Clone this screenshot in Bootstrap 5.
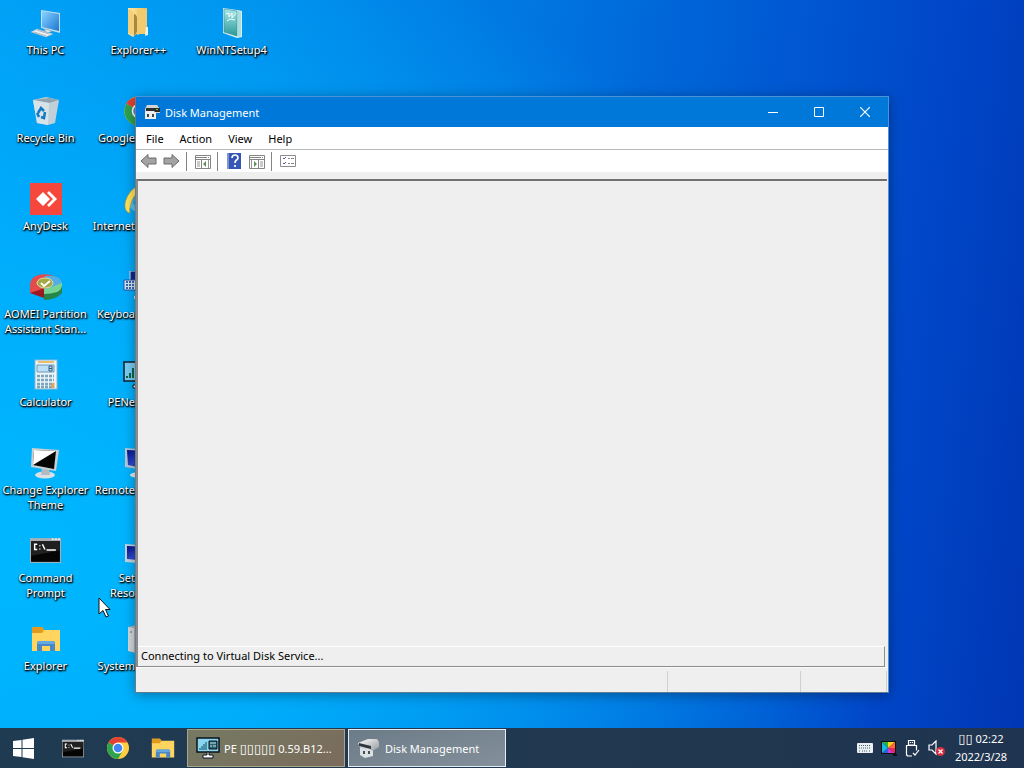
<!DOCTYPE html>
<html lang="en">
<head>
<meta charset="utf-8">
<meta name="viewport" content="width=device-width, initial-scale=1">
<title>Disk Management</title>
<link href="https://cdn.jsdelivr.net/npm/bootstrap@5.3.0/dist/css/bootstrap.min.css" rel="stylesheet">
<style>
body{font-family:"Noto Sans","Open Sans",sans-serif;font-size:11px;line-height:15px;min-height:100vh;
 background:radial-gradient(ellipse 88% 85% at 0% 72%,rgba(0,184,255,.98) 0%,rgba(0,180,255,.85) 35%,rgba(0,150,245,0) 100%),linear-gradient(97deg,#009cf4 0%,#008eec 25%,#0076e0 48%,#005cd4 68%,#0046c8 86%,#0036b2 100%);overflow:hidden}
button{font:inherit;color:inherit;background:none;border:0;padding:0}
svg{display:block;flex:none}
.icon-grid{display:grid;grid-template-columns:repeat(3,93px);grid-auto-rows:88px;margin-left:-1px}
.desk-item{color:#fff;text-decoration:none;text-align:center;text-shadow:1px 1px 2px #000,0 1px 2px #000,1px 1px 1px rgba(0,0,0,.7);padding-top:7px}
.desk-item svg{margin:0 auto 3px}
.desk-item span{display:block;white-space:nowrap}
.desk-item.covered span{text-align:right;padding-right:50px}
.app-win{inset:96px 135px 35px;background:#efefef;border:1px solid #4a94d4;border-left-color:#6b7c88;border-bottom-color:#5f7c90;box-shadow:0 2px 12px rgba(0,0,0,.35)}
.title-row{height:30px;background:#0078d9;color:#fff}
.title-row>svg{margin:0 5px 0 8px}
.caption-btn{width:46px;height:29px;display:grid;place-items:center}
.menu-row{height:23px;background:#fff;border-bottom:1px solid #b4b9bd;color:#000;padding-left:2px}
.menu-row button{padding:0 8px}
.tool-row{height:22px;background:#fff;padding-left:1px;border-bottom:0}
.tool-row button{width:23px;height:22px;display:grid;place-items:center}
.tool-sep{width:1px;height:19px;background:#858585;margin:0 4px 0 3px}
.client{border-top:2px solid #707070;border-left:2px solid #8b8b8b;margin:7px 1px 0 0}
.msg-row{height:21px;border-top:1px solid #fff;border-right:1px solid #8c8c8c;border-bottom:1px solid #8c8c8c;color:#000;padding:1px 0 0 3px;margin-right:2px}
.status-row{height:25px;border-top:1px solid #fafafa;padding-right:1px}
.status-row div{border-right:1px solid #d0d0d0;margin-top:3px}
.pane-a{width:133px}
.pane-b{width:86px}
.task-bar{height:40px;background:linear-gradient(90deg,#1f3b52,#21374f 70%,#1f3450);color:#fff}
.launch{width:46px;height:40px;display:grid;place-items:center}
.launch.slim{width:44px}
.task-btn{width:158px;height:38px;border:1px solid #a9a38c;background:linear-gradient(150deg,#757a61,#7b6b5c);padding:0 0 0 8px;margin-left:1px}
.task-btn.front{border-color:#e5edf2;background:linear-gradient(165deg,#6b7b87,#84909b);margin-left:3px}
.tofu{font-family:"DejaVu Sans",sans-serif;font-size:13px;line-height:1}
.clock{line-height:18px;width:70px}
.pointer{left:98px;top:597px;z-index:5}
</style>
</head>
<body class="d-flex flex-column">
<svg width="0" height="0" class="position-absolute" aria-hidden="true">
<defs>
<linearGradient id="gold" x2="1"><stop stop-color="#ffe9a5"/><stop offset="1" stop-color="#e8bd59"/></linearGradient>
<linearGradient id="scr" x2="1" y2="1"><stop stop-color="#8bd5ff"/><stop offset="1" stop-color="#1976d2"/></linearGradient>
<linearGradient id="navy" x2="1" y2="1"><stop stop-color="#00108a"/><stop offset=".5" stop-color="#314bce"/><stop offset="1" stop-color="#000f70"/></linearGradient>
<linearGradient id="teal" x2="0" y2="1"><stop stop-color="#a6e7ea"/><stop offset="1" stop-color="#2b9998"/></linearGradient>
<linearGradient id="metal" x2="1" y2="1"><stop stop-color="#fff"/><stop offset="1" stop-color="#919599"/></linearGradient>
<symbol id="chrome" viewBox="0 0 24 24"><circle cx="12" cy="12" r="11" fill="#ffcd40"/><path d="M12 12 2.5 6.5A11 11 0 0 1 21.5 6.5H12z" fill="#e34133"/><path d="M2.5 6.5A11 11 0 0 0 12 23l4.7-8.2L12 12z" fill="#2da34f"/><circle cx="12" cy="12" r="5.5" fill="#fff"/><circle cx="12" cy="12" r="4.3" fill="#4285f4"/></symbol>
<symbol id="folder" viewBox="0 0 30 26"><path d="M1 1h10l2 2v5H1z" fill="#e09a20"/><path d="M1 7h10l2-3h16v21H1z" fill="#ffd45f"/><path d="M6 25v-8q0-2 2-2h14q2 0 2 2v8h-5v-5h-8v5z" fill="#4688c8"/><path d="M7 15h16l1 3H6z" fill="#65a9e0"/></symbol>
<symbol id="cmd" viewBox="0 0 30 24"><path d="M0 0h30v24H0z" fill="#a9afb4"/><path d="M1 3h28v20H1z" fill="#050505"/><path d="M1 3h28v9L1 17z" fill="#202020"/><path d="M21 1h2M24 1h2M27 1h2" stroke="#fff"/><path d="M7 6H4.500v5H7M9.500 7v1M9.500 10v1M12 6l2.500 5M16 11.500h9" fill="none" stroke="#fff" stroke-width="1.400"/></symbol>
<symbol id="net" viewBox="0 0 24 22"><path d="M1 1h22v14H1z" fill="#8bd5f1" stroke="#07151d" stroke-width="1.500"/><path d="M4 13v-2M6 13v-4M8 13V7M10 13V5" stroke="#075060"/><path d="M13 4h8v8h-8z" fill="#2e6470" stroke="#07151d"/><path d="M14 6h6M14 9h2m1 0h3" stroke="#b5e8f4"/><path d="M11 15h2v3h4v3H7v-3h4z" fill="#fff" stroke="#07151d"/></symbol>
</defs></svg>

<main class="position-relative flex-grow-1">
<nav class="icon-grid" aria-label="Desktop">
<a class="desk-item" href="#"><svg width="32" height="32" viewBox="0 0 32 32"><path d="m11 3 19 3v20l-19-5z" fill="#c4dce9"/><path d="m12 4 17 3v17l-17-4z" fill="url(#scr)"/><path d="m14 22 8 2-5 2zM1 25l6-3 16 5-7 3z" fill="#e9eef1" stroke="#9dacb5" stroke-width=".6"/><path d="m4 25 12 4m-9-6 12 4" stroke="#aab9c1"/></svg><span>This PC</span></a>
<a class="desk-item" href="#"><svg width="32" height="32" viewBox="0 0 32 32"><path d="M5 1h19v26H13l-3 3-5-3z" fill="url(#gold)"/><path d="M5 2q6 1 6 6v21l-6-3z" fill="#f4cf79"/><path d="M11 7q2 0 3 3v15l-3 4z" fill="#a98646"/><path d="M14 3h10v24h-7l-3 1z" fill="#f1cb6e"/><path d="M23 20h2v8l-3 1z" fill="#edf2f5"/></svg><span>Explorer++</span></a>
<a class="desk-item" href="#"><svg width="32" height="32" viewBox="0 0 32 32"><path d="m7 1 14 2 5 1v26l-5 1-14-5z" fill="#d8f0f0"/><path d="m8 2 13 2v25L8 25z" fill="url(#teal)" stroke="#388f95" stroke-width=".6"/><path d="m22 4 3 1v24l-3 1z" fill="#a7dfe0"/><path d="m10 7 3-1v4l3-4v5l4-5M11 14l3-2 5 1" stroke="#f5ffff" fill="none"/></svg><span>WinNTSetup4</span></a>

<a class="desk-item" href="#"><svg width="32" height="32" viewBox="0 0 32 32"><path d="m3 5 13-3 13 3-4 23-7 2-11-2z" fill="#c1cfd8"/><path d="m3 5 16 3 10-3-10-2z" fill="#91a4ae"/><path d="m3 5 16 3-1 22-11-2z" fill="#d8e3e9"/><path d="m8 18 3-5 3 3m1 1-1 6-3-1m-2 0-2-4" fill="none" stroke="#1179c4" stroke-width="2.500"/></svg><span>Recycle Bin</span></a>
<a class="desk-item covered" href="#"><svg width="32" height="32"><use href="#chrome"/></svg><span>Google</span></a><i></i>

<a class="desk-item" href="#"><svg width="32" height="32" viewBox="0 0 32 32"><path d="M0 0h32v32H0z" fill="#f5473b"/><path d="m13 9 7 7-7 7-7-7zM17 10l2-2 8 8-8 8-2-2 6-6z" fill="#fff"/></svg><span>AnyDesk</span></a>
<a class="desk-item covered" href="#"><svg width="32" height="32" viewBox="0 0 32 32"><circle cx="17" cy="17" r="10" fill="none" stroke="#56bff2" stroke-width="5"/><path d="M10 17h16" stroke="#3babe2" stroke-width="4"/><path d="M7 30C-3 28 3 7 17 2s16 3 11 7C27 2 12 7 8 20q-2 6-1 10" fill="#ffe45d" stroke="#c79818" stroke-width=".6"/></svg><span>Internet</span></a><i></i>

<a class="desk-item" href="#"><svg width="32" height="32" viewBox="0 0 32 32"><path d="M0 13v9l14 5V16z" fill="#9d1920"/><path d="M0 14C0 2 18 1 26 6L15 17 0 22z" fill="#e44c4c"/><path d="M14 18 32 12v10q-6 7-18 7z" fill="#26864a"/><path d="m14 18 18-7q1 7-5 10-6 2-13 2z" fill="#77d494"/><path d="M15 5q15-2 17 7l-16 6z" fill="#51aee7"/><ellipse cx="15" cy="12" rx="8" ry="5" fill="#a3a744" stroke="#e5e0a0"/><path d="m11 12 3 3 6-5" fill="none" stroke="#fff" stroke-width="2"/></svg><span>AOMEI Partition</span><span>Assistant Stan...</span></a>
<a class="desk-item covered" href="#"><svg width="32" height="32" viewBox="0 0 32 32"><path d="M7 0h22v18H7z" fill="#102b8d" stroke="#dbe4ee"/><path d="M1 9h25l-2 10H1z" fill="#dce5ef" stroke="#2254a4"/><path d="M3 11h20M3 14h20M3 17h18" stroke="#326bb8" stroke-width="2" stroke-dasharray="2 1"/><path d="M15 20h7v5h4v3H11v-3h4z" fill="#ced8df"/></svg><span>Keyboa</span></a><i></i>

<a class="desk-item" href="#"><svg width="32" height="32" viewBox="0 0 32 32"><rect x="5" y="1" width="22" height="29" fill="#edf3f7" stroke="#8bb8d1"/><path d="M8 3h16" stroke="#e7bd6e" stroke-width="2"/><path d="M7 6h17v7H7z" fill="#bcdff5" stroke="#719bb9"/><path d="M19 7h3v5h-3zM19 9.500h3" fill="none" stroke="#315e7d"/><path d="M7 17h17M7 21h17M7 25h17M7 28h17" stroke="#7ba4bf" stroke-width="2.500" stroke-dasharray="3 1"/><path d="M23 24v5" stroke="#e9a44e" stroke-width="3"/></svg><span>Calculator</span></a>
<a class="desk-item covered" href="#"><svg width="32" height="32" viewBox="0 0 32 32"><path d="M1 3h30v19H1z" fill="#78ccf3" stroke="#101f2c" stroke-width="1.500"/><path d="M4 19v-2M7 19v-5M10 19V9M13 19V5" stroke="#096846" stroke-width="2"/><path d="M14 22h5v3h4v4H10v-3h4z" fill="#fff" stroke="#111"/></svg><span>PENe</span></a><i></i>

<a class="desk-item" href="#"><svg width="32" height="32" viewBox="0 0 32 32"><ellipse cx="15" cy="28" rx="10" ry="3.500" fill="#d9e1e5"/><path d="M12 20h7l1 8h-9z" fill="#b2bbc1"/><path d="m2 1 27 2-3 21L1 20z" fill="#c9d0d3"/><path d="m4 3 22 1-2 18-21-4z" fill="#050505"/><path d="m4 3 22 1L3 18z" fill="#fff"/></svg><span>Change Explorer</span><span>Theme</span></a>
<a class="desk-item covered" href="#"><svg width="32" height="32" viewBox="0 0 32 32"><path d="m2 1 27 2-3 21L2 20z" fill="#b9c6d5"/><path d="m4 3 22 1-2 18-19-4z" fill="url(#navy)"/><ellipse cx="16" cy="28" rx="9" ry="3" fill="#e4edf4"/><path d="M12 22h7v5h-7z" fill="#d7e3ea"/></svg><span>Remote</span></a><i></i>

<a class="desk-item" href="#"><svg width="32" height="32" viewBox="0 0 32 32"><use href="#cmd" x="0" y="3" width="31" height="25"/></svg><span>Command</span><span>Prompt</span></a>
<a class="desk-item covered" href="#"><svg width="32" height="32" viewBox="0 0 32 32"><path d="m2 9 27 2v18L2 27z" fill="#c7d1dd"/><path d="m4 11 23 1v14L4 24z" fill="url(#navy)"/><path d="M12 27h12v4H12z" fill="#e7edf1"/></svg><span>Set</span><span>Reso</span></a><i></i>

<a class="desk-item" href="#"><svg width="32" height="32" viewBox="0 0 32 32"><use href="#folder" x="1" y="3" width="30" height="26"/></svg><span>Explorer</span></a>
<a class="desk-item covered" href="#"><svg width="32" height="32" viewBox="0 0 32 32"><path d="m5 4 12-3 11 3v23l-12 4-11-3z" fill="#a8b0b7"/><path d="m5 4 6 1v24l-6-1z" fill="#d3d9dc"/><path d="M7 9h2" stroke="#62717b"/></svg><span>System</span></a>
</nav>

<section class="app-win position-absolute d-flex flex-column" aria-label="Disk Management">
<header class="title-row d-flex align-items-center">
<svg width="16" height="16" viewBox="0 0 16 16"><path d="M3 1h10l3 4v4H1V5z" fill="#d4d5d2"/><path d="M2 4h14v4H2z" fill="#292d2b"/><path d="M12 5h2v1h-2z" fill="#88c440"/><path d="m1 9 1-2h8l2 2v6H1z" fill="#eee"/><path d="M3 10h2v3H3zm5 0h2v3H8z" fill="#3b454b"/></svg>
<span class="me-auto">Disk Management</span>
<button class="caption-btn" aria-label="Minimize"><svg width="10" height="10" viewBox="0 0 10 10"><path d="M0 5.500h10" stroke="#fff"/></svg></button>
<button class="caption-btn" aria-label="Maximize"><svg width="10" height="10" viewBox="0 0 10 10"><path d="M.5.5h9v9h-9z" fill="none" stroke="#fff"/></svg></button>
<button class="caption-btn" aria-label="Close"><svg width="10" height="10" viewBox="0 0 10 10"><path d="m0 0 10 10M10 0 0 10" stroke="#fff" stroke-width="1.200"/></svg></button>
</header>
<div class="menu-row d-flex"><button>File</button><button>Action</button><button>View</button><button>Help</button></div>
<div class="tool-row d-flex align-items-center">
<button aria-label="Back"><svg width="17" height="16" viewBox="0 0 17 16"><path d="M1 8 8 1.500V5h8v6H8v3.500z" fill="#a3a3a3" stroke="#6c6c6c"/></svg></button>
<button aria-label="Forward"><svg width="17" height="16" viewBox="0 0 17 16"><path d="M16 8 9 1.500V5H1v6h8v3.500z" fill="#a3a3a3" stroke="#6c6c6c"/></svg></button>
<i class="tool-sep"></i>
<button aria-label="Show console tree"><svg width="16" height="16" viewBox="0 0 16 16"><path d="M.5 2.500h15v13H.5z" fill="#fff" stroke="#858585"/><path d="M1 4.500h11m1 0h1M1 6.500h14M6.500 7v8" stroke="#858585"/><path d="M2 9h3M2 11h3M2 13h3M13.500 7v8" stroke="#969696"/><path d="m11 8-3 3 3 3z" fill="#5b9259"/></svg></button>
<i class="tool-sep"></i>
<button aria-label="Help"><svg width="14" height="16" viewBox="0 0 14 16"><path d="M0 0h14v16H0z" fill="#3556b5"/><path d="M1 0v16" stroke="#8192d5" stroke-width="2"/><path d="M5 5q0-3 3-3t3 3q0 1-2 2.500-1 .8-1 2.500M8 12v2" fill="none" stroke="#fff" stroke-width="1.700"/></svg></button>
<button aria-label="Show action pane"><svg width="16" height="16" viewBox="0 0 16 16"><path d="M.5 2.500h15v13H.5z" fill="#fff" stroke="#858585"/><path d="M1 4.500h11m1 0h1M1 6.500h14M9.500 7v8" stroke="#858585"/><path d="M11 9h3M11 11h3M11 13h3M2.500 7v8" stroke="#969696"/><path d="m5 8 3 3-3 3z" fill="#5b9259"/></svg></button>
<i class="tool-sep"></i>
<button aria-label="Properties"><svg width="16" height="14" viewBox="0 0 16 14"><path d="M.5 1.500h15v11H.5z" fill="#fff" stroke="#8c8c8c"/><path d="m3 4 1 1 2-2M3 9l1 1 2-2" fill="none" stroke="#475dab"/><path d="M8 4.500h2m1 0h3M8 9.500h2m1 0h3" stroke="#858585"/></svg></button>
</div>
<div class="client flex-grow-1 d-flex flex-column justify-content-end"><div class="msg-row">Connecting to Virtual Disk Service...</div></div>
<footer class="status-row d-flex"><div class="flex-grow-1"></div><div class="pane-a"></div><div class="pane-b"></div></footer>
</section>
<svg class="pointer position-absolute" width="13" height="21" viewBox="0 0 13 21"><path d="M1 1v16l4-3.500 3 6.500 2.500-1-3-6.500H12z" fill="#fff" stroke="#111"/></svg>
</main>

<footer class="task-bar d-flex align-items-center">
<button class="launch" aria-label="Start"><svg width="21" height="21" viewBox="0 0 21 21"><path d="m0 3 8.500-1v8H0zm9.500-1.200L21 0v10H9.500zM0 11h8.500v8L0 18zm9.500 0H21v10L9.500 19.200z" fill="#fff"/></svg></button>
<button class="launch ms-1" aria-label="Command Prompt"><svg width="22" height="19"><use href="#cmd"/></svg></button>
<button class="launch slim" aria-label="Google Chrome"><svg width="24" height="24"><use href="#chrome"/></svg></button>
<button class="launch" aria-label="Explorer"><svg width="24" height="22"><use href="#folder"/></svg></button>
<button class="task-btn d-flex align-items-center"><svg class="me-1" width="24" height="22"><use href="#net"/></svg><span>PE <span class="tofu">▯▯▯▯▯</span> 0.59.B12...</span></button>
<button class="task-btn front d-flex align-items-center me-auto"><svg class="me-1" width="24" height="22" viewBox="0 0 24 22"><path d="m1 6 10-4h9l2 3v5l-8 5H5z" fill="url(#metal)"/><path d="m2 6 12 3v3L2 9z" fill="#30383f"/><path d="m3 11 9 1 4 2v5l-8 2-5-3z" fill="#dbe0e3"/><path d="M6 14h2v3H6zm5 0h2v3h-2z" fill="#42505b"/></svg><span>Disk Management</span></button>
<button class="me-2" aria-label="Keyboard"><svg width="16" height="12" viewBox="0 0 16 12"><rect y="1" width="16" height="10" rx="1" fill="#e9eef1"/><path d="M2 3.500h12M2 6h12M2 9h2m1 0h6m1 0h2" stroke="#466075" stroke-dasharray="1 1"/></svg></button>
<button class="me-2" aria-label="Display colors"><svg width="16" height="16" viewBox="0 0 16 16"><path d="M0 1h15v13h1v2h-4v-2H0z" fill="#111"/><path d="M7 8 1 2h6z" fill="#26b343"/><path d="M7 8V2h7z" fill="#ffcf26"/><path d="M7 8 14 2v6z" fill="#ff693b"/><path d="M7 8h7v5z" fill="#f1265a"/><path d="M7 8l7 5H7z" fill="#d03bc9"/><path d="M7 8v5H1z" fill="#345ce4"/><path d="m7 8-6 5V2z" fill="#15b9e4"/></svg></button>
<button class="me-2" aria-label="Safely remove hardware"><svg width="15" height="18" viewBox="0 0 15 18"><path d="M3.500 1.500h6V6h-6zM1.500 6.500h10v5M1.500 6v9q0 2 2 2H7M5.500 3v1m2-1v1M8 14l2 2 4-5" fill="none" stroke="#fff" stroke-width="1.200"/></svg></button>
<button aria-label="Volume muted"><svg width="18" height="16" viewBox="0 0 18 16"><path d="M1 5h3l4-4v13l-4-4H1z" fill="none" stroke="#fff" stroke-width="1.200"/><circle cx="12.500" cy="11.500" r="4.500" fill="#d72c3e"/><path d="m10.500 9.500 4 4m0-4-4 4" stroke="#fff" stroke-width="1.200"/></svg></button>
<time class="clock text-center me-2"><span class="tofu">▯▯</span> 02:22<br>2022/3/28</time>
</footer>
<script src="https://cdn.jsdelivr.net/npm/bootstrap@5.3.0/dist/js/bootstrap.bundle.min.js"></script>
</body>
</html>
